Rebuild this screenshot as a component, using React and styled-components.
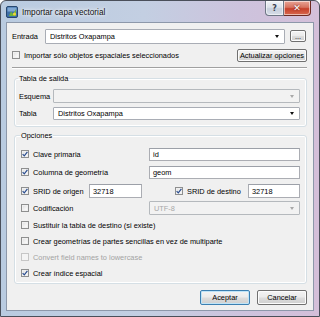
import React from "react";
import styled, { createGlobalStyle } from "styled-components";

const GlobalStyle = createGlobalStyle`
  html, body {
    margin: 0;
    padding: 0;
    background: #ffffff;
  }
  body {
    font-family: "Liberation Sans", Arial, sans-serif;
  }
`;

const Window = styled.div`
  width: 320px;
  height: 317px;
  box-sizing: border-box;
  display: flex;
  flex-direction: column;
  border: 1px solid #4a4f5a;
  border-radius: 6px 6px 0 0;
  background: linear-gradient(to right, #b9cbe0 0%, #c3cfe2 45%, #cdc3dd 75%, #d4bfd9 100%);
  padding: 0 5px 5px 5px;
  font-size: 7.4px;
  color: #000;
`;

const TitleBar = styled.div`
  height: 21px;
  display: flex;
  align-items: flex-start;
  flex-shrink: 0;
`;

const TitleIcon = styled.svg`
  width: 12px;
  height: 12px;
  margin: 5px 4px 0 0;
  flex-shrink: 0;
`;

const Caption = styled.div`
  flex: 1;
  font-size: 8.2px;
  color: #111;
  padding-top: 7px;
  text-shadow: 0 0 6px #ffffff, 0 0 3px #ffffff;
`;

const CaptionButtons = styled.div`
  display: flex;
  margin-right: 3px;
`;

const CaptionButton = styled.div`
  height: 15px;
  width: ${(p) => (p.$close ? "27px" : "19px")};
  box-sizing: border-box;
  border: 1px solid ${(p) => (p.$close ? "#6e2a22" : "#6d7685")};
  border-top: none;
  border-left: ${(p) => (p.$close ? "none" : "1px solid #6d7685")};
  border-radius: ${(p) => (p.$close ? "0 0 4px 0" : "0 0 0 4px")};
  background: ${(p) =>
    p.$close
      ? "linear-gradient(#e9a597 0%, #d7725f 45%, #c7402b 55%, #d7684e 100%)"
      : "linear-gradient(#f0f2f6 0%, #dce1ea 45%, #c7cfdc 55%, #d6dde8 100%)"};
  color: ${(p) => (p.$close ? "#ffffff" : "#3b4250")};
  font-family: "DejaVu Sans", sans-serif;
  font-weight: bold;
  font-size: ${(p) => (p.$close ? "9px" : "8px")};
  display: flex;
  align-items: center;
  justify-content: center;
  box-shadow: inset 0 0 0 1px rgba(255, 255, 255, 0.55);
  text-shadow: ${(p) => (p.$close ? "0 0 2px #5a1a10" : "none")};
`;

const Client = styled.div`
  flex: 1;
  background: #f0f0f0;
  border: 1px solid #8d98aa;
  display: flex;
  flex-direction: column;
  padding: 5px 6px 0 5px;
`;

const Row = styled.div`
  display: flex;
  align-items: center;
  height: ${(p) => p.$h || 16}px;
  margin-top: ${(p) => p.$mt || 0}px;
`;

const Label = styled.span`
  width: ${(p) => (p.$w ? p.$w + "px" : "auto")};
  flex-shrink: 0;
  color: ${(p) => (p.$disabled ? "#a3a3a3" : "#000")};
  white-space: nowrap;
`;

const Combo = styled.div`
  flex: 1;
  height: ${(p) => p.$h || 13}px;
  box-sizing: border-box;
  border: 1px solid ${(p) => (p.$disabled ? "#b5b9bd" : "#a9adb5")};
  background: ${(p) => (p.$disabled ? "#f2f2f2" : "#ffffff")};
  color: ${(p) => (p.$disabled ? "#a8a8a8" : "#000")};
  display: flex;
  align-items: center;
  padding-left: 4px;
  border-radius: 1px;
`;

const ComboText = styled.span`
  flex: 1;
  white-space: nowrap;
  overflow: hidden;
`;

const Arrow = styled.span`
  width: 0;
  height: 0;
  border-left: 2.5px solid transparent;
  border-right: 2.5px solid transparent;
  border-top: 3px solid ${(p) => (p.$disabled ? "#a8a8a8" : "#111")};
  margin-right: 5px;
`;

const Input = styled.div`
  flex: ${(p) => (p.$w ? "none" : "1")};
  width: ${(p) => (p.$w ? p.$w + "px" : "auto")};
  height: ${(p) => p.$h || 13}px;
  box-sizing: border-box;
  border: 1px solid #abadb3;
  border-top-color: #9ca0a8;
  background: #ffffff;
  display: flex;
  align-items: center;
  padding-left: 3px;
`;

const Button = styled.div`
  height: ${(p) => p.$h || 14}px;
  width: ${(p) => (p.$w ? p.$w + "px" : "auto")};
  box-sizing: border-box;
  padding: 0 ${(p) => (p.$w ? 0 : 2)}px;
  border: 1px solid ${(p) => (p.$default ? "#3c7fb1" : "#707070")};
  border-radius: 2px;
  background: linear-gradient(#f3f3f3 0%, #ebebeb 48%, #dddddd 52%, #cfcfcf 100%);
  box-shadow: inset 0 0 0 1px ${(p) => (p.$default ? "#bfe4f8" : "#fcfcfc")};
  display: flex;
  align-items: center;
  justify-content: center;
  white-space: nowrap;
  color: #000;
  flex-shrink: 0;
`;

const Spacer = styled.div`
  flex: 1;
`;

const Separator = styled.div`
  height: 0;
  border-top: 1px solid #a0a0a0;
  border-bottom: 1px solid #ffffff;
  margin: 5px 0 0 0;
`;

const Group = styled.fieldset`
  margin: ${(p) => p.$top}px 0 0 2px;
  padding: 0 6px ${(p) => p.$bottom}px ${(p) => p.$left || 4}px;
  border: 1px solid #d5dfe5;
  border-radius: 3px;
  box-shadow: inset 0 0 0 1px #ffffff;
  min-width: 0;
`;

const Legend = styled.legend`
  padding: 0 1px;
  margin-left: -1px;
  color: #000;
  font-size: 7.4px;
  line-height: 9px;
`;

const CheckBox = styled.span`
  width: 8px;
  height: 8px;
  box-sizing: border-box;
  border: 1px solid ${(p) => (p.$disabled ? "#c6c6c6" : "#8e8f8f")};
  background: ${(p) =>
    p.$disabled ? "#f4f4f4" : "linear-gradient(135deg, #dcdcdc 0%, #f4f4f4 60%, #ffffff 100%)"};
  box-shadow: inset 0 0 0 1px ${(p) => (p.$disabled ? "#f4f4f4" : "#f0f0f0")};
  margin-right: 4px;
  flex-shrink: 0;
  display: flex;
  align-items: center;
  justify-content: center;
`;

const Check = () => (
  <svg width="6" height="6" viewBox="0 0 6 6">
    <path d="M0.6 3.1 L2.3 4.9 L5.4 0.8" fill="none" stroke="#2a4d8f" strokeWidth="1.2" />
  </svg>
);

const CheckItem = ({ checked, disabled, children, w }) => (
  <>
    <CheckBox $disabled={disabled}>{checked && <Check />}</CheckBox>
    <Label $w={w} $disabled={disabled}>
      {children}
    </Label>
  </>
);

const Footer = styled.div`
  display: flex;
  justify-content: flex-end;
  gap: 7px;
  margin-top: 6px;
`;

const AppIcon = () => (
  <TitleIcon viewBox="0 0 12 12">
    <rect x="0.5" y="0.5" width="11" height="11" rx="1.5" fill="#3f6fa8" stroke="#27476f" />
    <rect x="1.5" y="1.5" width="9" height="4" fill="#7fa7d3" />
    <path d="M3 10 L5 5.5 L7 8 L10 3 L10 10 Z" fill="#6fb43a" />
    <circle cx="8.5" cy="8" r="1.6" fill="#f0d33a" />
  </TitleIcon>
);

export default function App() {
  return (
    <>
      <GlobalStyle />
      <Window>
        <TitleBar>
          <AppIcon />
          <Caption>Importar capa vectorial</Caption>
          <CaptionButtons>
            <CaptionButton>?</CaptionButton>
            <CaptionButton $close>✕</CaptionButton>
          </CaptionButtons>
        </TitleBar>
        <Client>
          <Row $h={16}>
            <Label $w={33}>Entrada</Label>
            <Combo $h={15}>
              <ComboText>Distritos Oxapampa</ComboText>
              <Arrow />
            </Combo>
            <Button $w={16} $h={12} style={{ marginLeft: 5, marginRight: 1 }}>
              ...
            </Button>
          </Row>
          <Row $h={14} $mt={4}>
            <CheckItem>Importar sólo objetos espaciales seleccionados</CheckItem>
            <Spacer />
            <Button $h={13}>Actualizar opciones</Button>
          </Row>
          <Separator />

          <Group $top={5} $bottom={4}>
            <Legend>Tabla de salida</Legend>
            <Row $h={18} $mt={4}>
              <Label $w={34}>Esquema</Label>
              <Combo $disabled $h={14}>
                <ComboText />
                <Arrow $disabled />
              </Combo>
            </Row>
            <Row $h={17}>
              <Label $w={34}>Tabla</Label>
              <Combo>
                <ComboText>Distritos Oxapampa</ComboText>
                <Arrow />
              </Combo>
            </Row>
          </Group>

          <Group $top={4} $bottom={2} $left={6}>
            <Legend>Opciones</Legend>
            <Row $h={16} $mt={6}>
              <CheckItem checked w={116}>
                Clave primaria
              </CheckItem>
              <Input>id</Input>
            </Row>
            <Row $h={16} $mt={2}>
              <CheckItem checked w={116}>
                Columna de geometría
              </CheckItem>
              <Input>geom</Input>
            </Row>
            <Row $h={16} $mt={3}>
              <CheckItem checked w={56}>
                SRID de origen
              </CheckItem>
              <Input $w={53} $h={14}>
                32718
              </Input>
              <Spacer />
              <CheckItem checked w={61}>
                SRID de destino
              </CheckItem>
              <Input $w={52} $h={14}>
                32718
              </Input>
            </Row>
            <Row $h={16} $mt={1}>
              <CheckItem w={116}>Codificación</CheckItem>
              <Combo $disabled $h={14}>
                <ComboText>UTF-8</ComboText>
                <Arrow $disabled />
              </Combo>
            </Row>
            <Row $h={16} $mt={1}>
              <CheckItem>Sustituir la tabla de destino (si existe)</CheckItem>
            </Row>
            <Row $h={16}>
              <CheckItem>Crear geometrías de partes sencillas en vez de multiparte</CheckItem>
            </Row>
            <Row $h={16}>
              <CheckItem disabled>Convert field names to lowercase</CheckItem>
            </Row>
            <Row $h={16}>
              <CheckItem checked>Crear índice espacial</CheckItem>
            </Row>
          </Group>

          <Footer>
            <Button $default $w={50} $h={15}>
              Aceptar
            </Button>
            <Button $w={50} $h={15}>
              Cancelar
            </Button>
          </Footer>
        </Client>
      </Window>
    </>
  );
}
